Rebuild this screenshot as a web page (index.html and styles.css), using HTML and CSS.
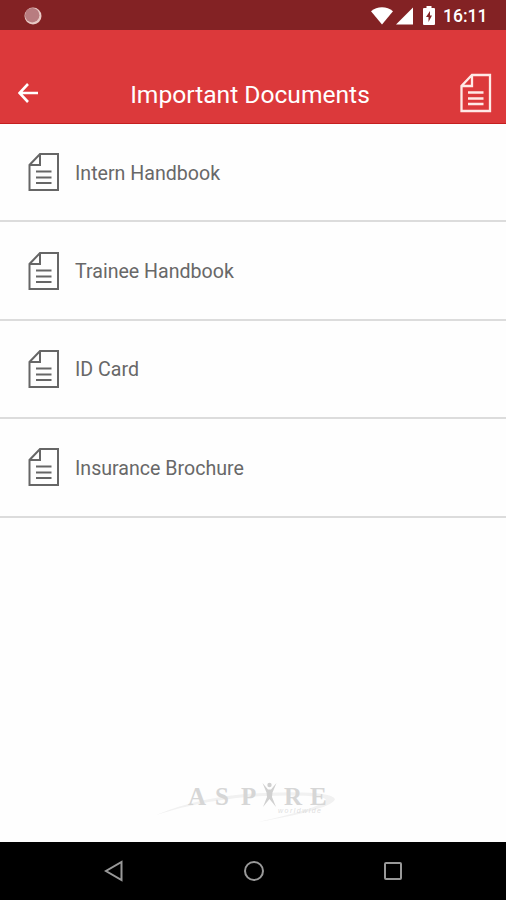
FILE: index.html
```html
<!DOCTYPE html>
<html lang="en">

<head>
    <meta charset="utf-8">
    <title>Important Documents</title>
    <link rel="stylesheet" href="styles.css">
</head>

<body>
    <!-- shared document icon -->
    <svg class="defs" width="0" height="0">
        <symbol id="doc" viewBox="0 0 32 40">
            <path d="M12 2H30V38H1.500V13Z M12 2V13H1.500" />
            <path d="M8 19.500H23.500 M8 25.500H23.500 M8 31H23.500" />
        </symbol>
    </svg>

    <div class="status-bar">
        <svg class="notification" width="18" height="18" viewBox="0 0 18 18">
            <circle cx="9" cy="9" r="8.5" fill="#e8c9c5" />
            <circle cx="8.2" cy="8.2" r="7.2" fill="#b87c80" />
        </svg>
        <svg class="wifi" width="22" height="18" viewBox="0 0 22 18">
            <path d="M0 4.2C6-1.1 16-1.1 22 4.2L11 17.5Z" />
        </svg>
        <svg class="signal" width="17" height="18" viewBox="0 0 17 18">
            <path d="M17 0.500V17.500H0Z" />
        </svg>
        <svg class="battery" width="12" height="19" viewBox="0 0 12 19">
            <path d="M3.5 0H8.5V2H11Q12 2 12 3V18Q12 19 11 19H1Q0 19 0 18V3Q0 2 1 2H3.5Z" />
            <path class="bolt" d="M7 5L3 11H5.5V16L9 9.5H7Z" />
        </svg>
        <span class="time">16:11</span>
    </div>

    <div class="header">
        <svg class="back" width="20" height="20" viewBox="0 0 20 20">
            <path d="M10 1L1.5 10L10 19 M1.5 10H20" />
        </svg>
        <h1>Important Documents</h1>
        <svg class="doc" width="32" height="40"><use href="#doc" /></svg>
    </div>

    <ul class="documents">
        <li><svg class="doc" width="32" height="40"><use href="#doc" /></svg><span>Intern Handbook</span></li>
        <li><svg class="doc" width="32" height="40"><use href="#doc" /></svg><span>Trainee Handbook</span></li>
        <li><svg class="doc" width="32" height="40"><use href="#doc" /></svg><span>ID Card</span></li>
        <li><svg class="doc" width="32" height="40"><use href="#doc" /></svg><span>Insurance Brochure</span></li>
    </ul>

    <div class="logo">
        <svg width="200" height="60" viewBox="0 0 200 60">
            <!-- swooshes behind the name -->
            <path class="swoosh" d="M11 45Q60 25 118 23Q185 20 190 29Q188 39 113 52Q176 38 181 30Q180 24 118 26Q65 28 11 45Z" />
            <text class="name" y="35" x="43 70 96">ASP</text>
            <text class="name" y="35" x="139 165">RE</text>
            <circle class="person" cx="124.500" cy="15" r="2.2" />
            <path class="person" d="M117.500 13L123 19.500H126L131.500 13L127.500 22.500L127 27L131 37L124.500 29L118 37L122 27L121.500 22.500Z" />
            <text class="tagline" x="133" y="43" textLength="43">worldwide</text>
        </svg>
    </div>

    <div class="nav-bar">
        <svg width="20" height="22" viewBox="0 0 20 22">
            <path d="M17.500 2V20L2 11Z" />
        </svg>
        <svg width="22" height="22" viewBox="0 0 22 22">
            <circle cx="11" cy="11" r="9" />
        </svg>
        <svg width="20" height="20" viewBox="0 0 20 20">
            <rect x="2" y="2" width="16" height="16" rx="1" />
        </svg>
    </div>
</body>

</html>
```
FILE: styles.css
```css
* {
    box-sizing: border-box;
}

body {
    display: flex;
    flex-direction: column;
    height: 900px;
    margin: 0;
    background-color: #fefefe;
    font-family: Roboto, sans-serif;
}

svg {
    display: block;
    flex: none;
}

.defs {
    display: none;
}

.status-bar {
    display: flex;
    align-items: center;
    height: 30px;
    padding: 1px 19px 0 24px;
    background-color: #832224;
    color: white;
    fill: white;
}

.wifi {
    margin-left: auto;
}

.signal {
    margin-left: 3px;
}

.battery {
    margin-left: 10px;
}

.bolt {
    fill: #832224;
}

.time {
    width: 44px;
    margin-left: 8px;
    font-size: 17.5px;
    font-weight: 500;
    white-space: nowrap;
}

.header {
    display: flex;
    justify-content: space-between;
    align-items: center;
    height: 94px;
    padding: 33px 14px 0 18px;
    background-color: #dc393b;
    border-bottom: 1px solid #c51f20;
    color: white;
}

.header h1 {
    margin: 2px 0 0 2px;
    font-size: 24.6px;
    font-weight: 400;
    white-space: nowrap;
}

.back {
    fill: none;
    stroke: white;
    stroke-width: 2.6;
}

.doc {
    fill: none;
    stroke: #666;
    stroke-width: 2;
}

.header .doc {
    stroke: #ffe9e6;
    stroke-width: 2.3;
}

.documents {
    margin: 0;
    padding: 0;
    list-style-type: none;
}

.documents li {
    display: flex;
    align-items: center;
    height: 98.4px;
    padding-left: 28px;
    border-bottom: 2px solid #dcdcdc;
    color: #686868;
    font-size: 19.6px;
}

.documents span {
    margin: 2px 0 0 15px;
}

.logo {
    margin: auto 0 12px 145px;
}

.swoosh {
    fill: #f1f1f1;
}

.name {
    fill: #d6d6d6;
    font-family: "Liberation Serif", serif;
    font-size: 25px;
    font-weight: bold;
}

.person {
    fill: #d0d0d0;
}

.tagline {
    fill: #dedede;
    font-family: "Liberation Sans", sans-serif;
    font-size: 7px;
    font-style: italic;
}

.nav-bar {
    display: flex;
    justify-content: space-between;
    align-items: center;
    height: 58px;
    padding: 0 103px 0 104px;
    background-color: black;
    fill: none;
    stroke: #999;
    stroke-width: 2;
}
```
